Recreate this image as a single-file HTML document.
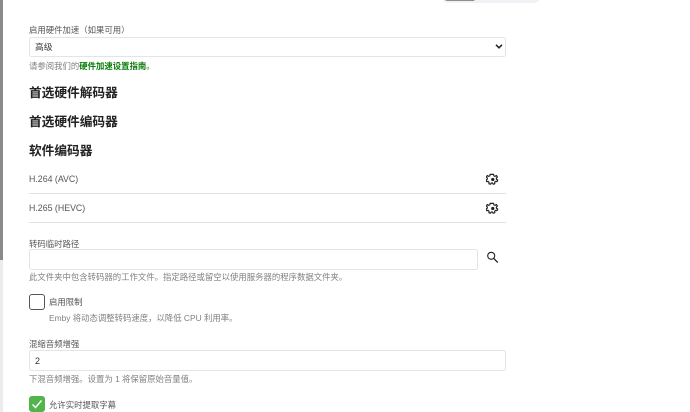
<!DOCTYPE html>
<html><head><meta charset="utf-8"><style>
html,body{margin:0;padding:0;background:#fff}
body{width:690px;height:412px;position:relative;overflow:hidden;font-family:"Liberation Sans","Noto Sans CJK SC",sans-serif;color:#333}
.a{position:absolute;white-space:nowrap}
.l{font-size:8.4px;line-height:12px;color:#555}
.h{font-size:8.4px;line-height:12px;color:#808080}
.t{font-size:12.7px;line-height:18px;font-weight:700;color:#222}
.box{position:absolute;box-sizing:border-box;border:1px solid #e4e4e4;border-radius:2.5px;background:#fff}
.ln{position:absolute;left:29px;width:477px;height:1px;background:#e2e2e2}
</style></head><body>
<div class="a" style="left:0;top:0;width:3px;height:260px;background:#8a8a8a"></div>
<div class="a" style="left:0;top:260px;width:3px;height:152px;background:#ececec"></div>
<div class="a" style="left:441px;top:-12px;width:100px;height:15px;border-radius:8px;background:#f2f2f6"></div>
<div class="a" style="left:445px;top:-8px;width:30px;height:9px;border-radius:2px;background:#8e8e8e"></div>

<div class="a l" style="left:29px;top:24px">启用硬件加速（如果可用）</div>
<div class="box" style="left:29px;top:37px;width:477px;height:20px"></div>
<div class="a" style="left:35px;top:41px;font-size:8.8px;line-height:12px;color:#444">高级</div>
<svg class="a" style="left:494px;top:43px" width="10" height="7" viewBox="0 0 10 7"><path d="M2 1.800L5 4.800L8 1.800" fill="none" stroke="#222" stroke-width="1.500"/></svg>
<div class="a h" style="left:29px;top:60px">请参阅我们的<span style="color:#0a7d0a;font-weight:700">硬件加速设置指南</span><span style="color:#0a7d0a">。</span></div>

<div class="a t" style="left:29px;top:84px">首选硬件解码器</div>
<div class="a t" style="left:29px;top:113px">首选硬件编码器</div>
<div class="a t" style="left:29px;top:142px">软件编码器</div>

<div class="a" style="left:29px;top:172.500px;font-size:8.800px;line-height:12px;color:#555">H.264 (AVC)</div>
<div class="ln" style="top:193px"></div>
<div class="a" style="left:29px;top:201.500px;font-size:8.800px;line-height:12px;color:#555">H.265 (HEVC)</div>
<div class="ln" style="top:222px"></div>

<svg class="a" style="left:486px;top:172.500px" width="13" height="13" viewBox="0 0 24 24"><path d="M12 2.5l2 0 .6 2.8 2 .9 2.5-1.5 2 2.600-2 2 .2 2.200 2.300 1.400-1.200 3-2.800-.4-1.600 1.600.2 2.800-3 .8-1.400-2.400h-2l-1.400 2.400-3-.8.2-2.800-1.600-1.600-2.800.4-1.200-3 2.300-1.400.2-2.200-2-2 2-2.600 2.500 1.500 2-.9.6-2.800z" fill="none" stroke="#222" stroke-width="2.200" stroke-linejoin="round"/><circle cx="12.500" cy="12" r="3" fill="#222"/></svg>
<svg class="a" style="left:486px;top:201.500px" width="13" height="13" viewBox="0 0 24 24"><path d="M12 2.5l2 0 .6 2.8 2 .9 2.5-1.5 2 2.600-2 2 .2 2.200 2.300 1.400-1.200 3-2.800-.4-1.600 1.600.2 2.800-3 .8-1.400-2.400h-2l-1.400 2.400-3-.8.2-2.800-1.600-1.600-2.800.4-1.200-3 2.300-1.400.2-2.200-2-2 2-2.600 2.500 1.500 2-.9.6-2.800z" fill="none" stroke="#222" stroke-width="2.200" stroke-linejoin="round"/><circle cx="12.500" cy="12" r="3" fill="#222"/></svg>

<div class="a l" style="left:29px;top:238px">转码临时路径</div>
<div class="box" style="left:29px;top:249px;width:449px;height:21px"></div>
<svg class="a" style="left:486px;top:251px" width="13" height="13" viewBox="0 0 13 13"><circle cx="5.200" cy="4.800" r="3.500" fill="none" stroke="#222" stroke-width="1.100"/><path d="M7.800 7.400L11.800 11.600" stroke="#222" stroke-width="1.300"/></svg>
<div class="a h" style="left:29px;top:271px">此文件夹中包含转码器的工作文件。指定路径或留空以使用服务器的程序数据文件夹。</div>

<div class="a" style="left:29px;top:294px;width:16px;height:16px;box-sizing:border-box;border:1.500px solid #555;border-radius:3px"></div>
<div class="a l" style="left:49px;top:296px">启用限制</div>
<div class="a h" style="left:49px;top:312px">Emby 将动态调整转码速度，以降低 CPU 利用率。</div>

<div class="a l" style="left:29px;top:338px">混缩音频增强</div>
<div class="box" style="left:29px;top:350px;width:477px;height:21px"></div>
<div class="a" style="left:35px;top:355px;font-size:9px;line-height:12px;color:#333">2</div>
<div class="a h" style="left:29px;top:373px">下混音频增强。设置为 1 将保留原始音量值。</div>

<div class="a" style="left:29px;top:396px;width:16px;height:16px;border-radius:3px;background:#52b54b"></div>
<svg class="a" style="left:29px;top:396px" width="16" height="16" viewBox="0 0 16 16"><path d="M3.500 8.500L6.500 11.500L12.500 4.500" fill="none" stroke="#fff" stroke-width="1.500"/></svg>
<div class="a l" style="left:49px;top:399px">允许实时提取字幕</div>
</body></html>
